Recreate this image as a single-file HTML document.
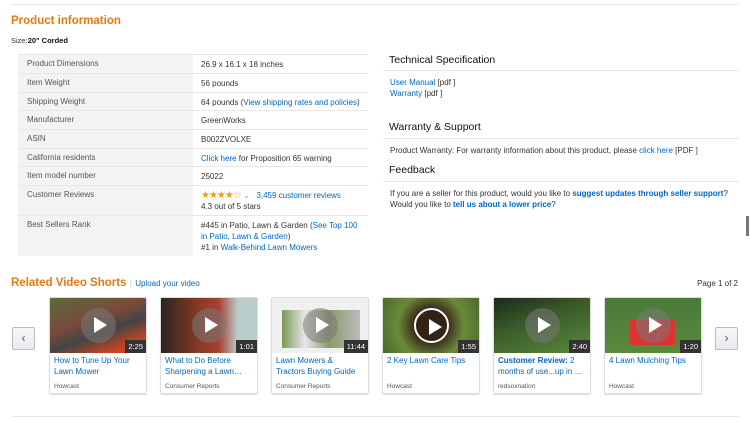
<!DOCTYPE html>
<html><head><style>
*{margin:0;padding:0;box-sizing:border-box}
body{width:750px;height:422px;background:#fff;font-family:"Liberation Sans",Arial,sans-serif;color:#111;position:relative;overflow:hidden;font-size:8px}
.a{position:absolute}
a,.l{color:#0066c0}
.row{position:absolute;left:18px;width:350px;border-top:1px solid #e7e7e7;font-size:8px}
.row .k{position:absolute;left:0;top:0;bottom:0;width:175px;background:#f3f3f3;color:#555;padding:4px 0 0 9px}
.row .v{position:absolute;left:183px;top:4px;color:#333;line-height:11px}
.h{position:absolute;left:389px;font-size:10.5px;color:#111}
.ln{position:absolute;left:383px;width:356px;height:1px;background:#e7e7e7}
.t{position:absolute;font-size:8px;color:#333;line-height:11px}
.card{position:absolute;top:297px;width:98px;height:97px;border:1px solid #ddd;border-radius:2px;box-shadow:0 1px 1px #ddd;overflow:hidden}
.th{height:55px;position:relative}
.pl{position:absolute;left:31px;top:10px;width:35px;height:35px;border-radius:50%;background:rgba(120,120,120,.55)}
.pl:after{content:"";position:absolute;left:13px;top:9px;border-left:13px solid #fff;border-top:8px solid transparent;border-bottom:8px solid transparent}
.du{position:absolute;right:0;bottom:0;background:#333;color:#fff;font-size:7.5px;padding:2px 3px}
.ti{color:#0066c0;font-size:8px;line-height:11px;padding:2px 4px 0;height:30px;overflow:hidden}
.src{font-size:6.5px;color:#555;padding:0 4px}
.arr{position:absolute;top:327px;width:23px;height:23px;border:1px solid #bbb;border-radius:2px;background:linear-gradient(#f7f8fa,#e7e9ec);color:#555;font-size:12px;text-align:center;line-height:21px}
</style></head><body>
<div class="a" style="left:11px;top:4px;width:728px;height:1px;background:#e7e7e7"></div>
<div class="a" style="left:11px;top:15px;font-size:11.5px;font-weight:bold;color:#e47911">Product information</div>
<div class="a" style="left:11px;top:36px;font-size:7.5px;color:#333">Size:<b style="color:#111">20" Corded</b></div>

<div class="row" style="top:54px;height:19px"><div class="k">Product Dimensions</div><div class="v">26.9 x 16.1 x 18 inches</div></div>
<div class="row" style="top:73px;height:19px"><div class="k">Item Weight</div><div class="v">56 pounds</div></div>
<div class="row" style="top:92px;height:18px"><div class="k">Shipping Weight</div><div class="v">64 pounds (<span class="l">View shipping rates and policies</span>)</div></div>
<div class="row" style="top:110px;height:19px"><div class="k">Manufacturer</div><div class="v">GreenWorks</div></div>
<div class="row" style="top:129px;height:19px"><div class="k">ASIN</div><div class="v">B002ZVOLXE</div></div>
<div class="row" style="top:148px;height:18px"><div class="k">California residents</div><div class="v"><span class="l">Click here</span> for Proposition 65 warning</div></div>
<div class="row" style="top:166px;height:19px"><div class="k">Item model number</div><div class="v">25022</div></div>
<div class="row" style="top:185px;height:30px"><div class="k">Customer Reviews</div><div class="v"><span style="color:#f0a000;font-size:10px;letter-spacing:-1px">★★★★☆</span> <span style="color:#999">⌄</span> &nbsp; <span class="l">3,459 customer reviews</span><br>4.3 out of 5 stars</div></div>
<div class="row" style="top:215px;height:41px"><div class="k">Best Sellers Rank</div><div class="v">#445 in Patio, Lawn &amp; Garden (<span class="l">See Top 100</span><br><span class="l">in Patio, Lawn &amp; Garden</span>)<br>#1 in <span class="l">Walk-Behind Lawn Mowers</span></div></div>

<div class="h" style="top:54px">Technical Specification</div><div class="ln" style="top:70px"></div>
<div class="t" style="left:390px;top:77px"><span class="l">User Manual</span> [pdf ]<br><span class="l">Warranty</span> [pdf ]</div>
<div class="h" style="top:121px">Warranty &amp; Support</div><div class="ln" style="top:138px"></div>
<div class="t" style="left:390px;top:145px">Product Warranty: For warranty information about this product, please <span class="l">click here</span> [PDF ]</div>
<div class="h" style="top:164px">Feedback</div><div class="ln" style="top:181px"></div>
<div class="t" style="left:390px;top:188px">If you are a seller for this product, would you like to <b class="l">suggest updates through seller support</b>?<br>Would you like to <b class="l">tell us about a lower price</b>?</div>
<div class="a" style="left:746px;top:216px;width:3px;height:20px;background:#777"></div>

<div class="a" style="left:11px;top:277px;font-size:11.5px;font-weight:bold;color:#e47911">Related Video Shorts <span style="color:#ccc;font-weight:normal;font-size:9px">|</span> <span style="color:#0066c0;font-weight:normal;font-size:8px">Upload your video</span></div>
<div class="a" style="right:12px;top:279px;font-size:8px;color:#333">Page 1 of 2</div>
<div class="arr" style="left:12px">‹</div>
<div class="arr" style="left:715px">›</div>

<div class="card" style="left:49px"><div class="th" style="background:linear-gradient(160deg,#5a6a3c,#7a4a3a 40%,#444 60%,#c42 85%)"><div class="pl"></div><div class="du">2:25</div></div><div class="ti">How to Tune Up Your Lawn Mower</div><div class="src">Howcast</div></div>
<div class="card" style="left:160px"><div class="th" style="background:linear-gradient(90deg,#2a2520,#8a3a25 40%,#a84030 60%,#bcc 80%)"><div class="pl"></div><div class="du">1:01</div></div><div class="ti">What to Do Before Sharpening a Lawn…</div><div class="src">Consumer Reports</div></div>
<div class="card" style="left:271px"><div class="th" style="background:#f0f0f0"><div style="position:absolute;left:10px;top:12px;width:78px;height:38px;background:linear-gradient(90deg,#7a9a5a,#e8e8e8 30%,#8a9a6a 60%,#bbb)"></div><div class="pl"></div><div class="du">11:44</div></div><div class="ti">Lawn Mowers &amp; Tractors Buying Guide</div><div class="src">Consumer Reports</div></div>
<div class="card" style="left:382px"><div class="th" style="background:radial-gradient(circle at 50% 50%,#3a2a1a 30%,#6a8a3a 60%,#4a6a2a)"><div class="pl" style="border:2px solid #fff;background:rgba(40,30,20,.5)"></div><div class="du">1:55</div></div><div class="ti">2 Key Lawn Care Tips</div><div class="src">Howcast</div></div>
<div class="card" style="left:493px"><div class="th" style="background:linear-gradient(160deg,#1a2a1a,#3a5a2a 40%,#5a8a3a)"><div class="pl"></div><div class="du">2:40</div></div><div class="ti"><b>Customer Review:</b> 2 months of use...up in …</div><div class="src">redsoxnation</div></div>
<div class="card" style="left:604px"><div class="th" style="background:linear-gradient(180deg,#4a7a3a,#5a8a3a);"><div style="position:absolute;left:25px;top:22px;width:45px;height:25px;background:#d33"></div><div class="pl"></div><div class="du">1:20</div></div><div class="ti">4 Lawn Mulching Tips</div><div class="src">Howcast</div></div>

<div class="a" style="left:11px;top:416px;width:728px;height:1px;background:#e7e7e7"></div>
</body></html>
